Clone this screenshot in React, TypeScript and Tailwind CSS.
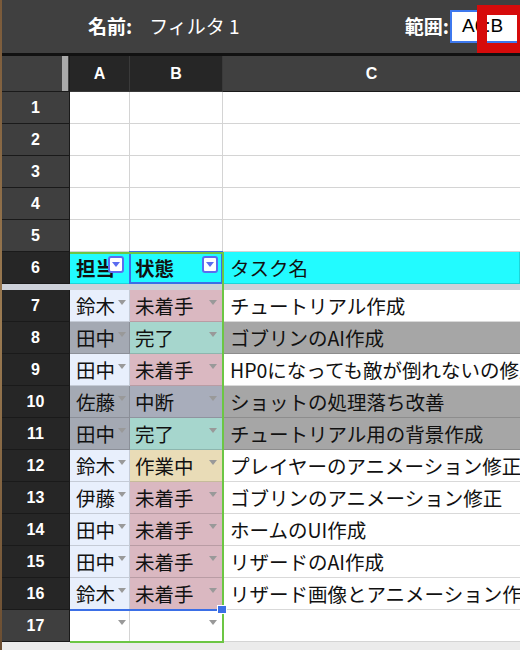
import React from "react"

type Row = { n: number; a: string; b: string; c: string; aBg: string; bBg: string; cBg: string }

const LB = "bg-[#e8effc]"
const GB = "bg-[#a4a9b3]"
const PK = "bg-[#dab8c1]"
const TL = "bg-[#a6d6cd]"
const BG = "bg-[#a8adbb]"
const BE = "bg-[#e9dcb7]"
const W = "bg-white"
const G = "bg-[#a6a6a6]"

const rows: Row[] = [
  { n: 7, a: "鈴木", b: "未着手", c: "チュートリアル作成", aBg: LB, bBg: PK, cBg: W },
  { n: 8, a: "田中", b: "完了", c: "ゴブリンのAI作成", aBg: GB, bBg: TL, cBg: G },
  { n: 9, a: "田中", b: "未着手", c: "HP0になっても敵が倒れないの修正", aBg: LB, bBg: PK, cBg: W },
  { n: 10, a: "佐藤", b: "中断", c: "ショットの処理落ち改善", aBg: GB, bBg: BG, cBg: G },
  { n: 11, a: "田中", b: "完了", c: "チュートリアル用の背景作成", aBg: GB, bBg: TL, cBg: G },
  { n: 12, a: "鈴木", b: "作業中", c: "プレイヤーのアニメーション修正", aBg: LB, bBg: BE, cBg: W },
  { n: 13, a: "伊藤", b: "未着手", c: "ゴブリンのアニメーション修正", aBg: LB, bBg: PK, cBg: W },
  { n: 14, a: "田中", b: "未着手", c: "ホームのUI作成", aBg: LB, bBg: PK, cBg: W },
  { n: 15, a: "田中", b: "未着手", c: "リザードのAI作成", aBg: LB, bBg: PK, cBg: W },
  { n: 16, a: "鈴木", b: "未着手", c: "リザード画像とアニメーション作成", aBg: LB, bBg: PK, cBg: W },
]

const rowHead = "h-[32px] flex items-center justify-center border-b border-r border-[#1a1a1a] text-white font-bold text-[16px] font-['Liberation_Sans',Arial,sans-serif]"
const cell = "relative h-[32px] flex items-center border-b border-r border-black/15 text-[19.5px] text-[#111] whitespace-nowrap overflow-hidden font-['Noto_Sans_CJK_JP',sans-serif]"

function Caret({ right }: { right: string }) {
  return (
    <span className={`absolute top-[10px] ${right} w-0 h-0 border-l-[4px] border-r-[4px] border-t-[5px] border-l-transparent border-r-transparent border-t-[#999]`} />
  )
}

function FilterBtn({ left }: { left: string }) {
  return (
    <span className={`absolute top-[4px] ${left} w-[16px] h-[17px] rounded-[3px] border-2 border-[#5b6cf0] bg-white flex items-center justify-center`}>
      <span className="w-0 h-0 border-l-[4px] border-r-[4px] border-t-[5px] border-l-transparent border-r-transparent border-t-[#5b6cf0]" />
    </span>
  )
}

export default function App() {
  return (
    <div className="w-[520px] h-[650px] overflow-hidden flex bg-[#ebebeb]">
      <div className="w-[2px] shrink-0 bg-gradient-to-b from-[#7a5a3a] via-[#9b7b52] to-[#6b4e32]" />
      <div className="flex-1 flex flex-col">
        {/* filter bar */}
        <div className="relative h-[53px] bg-[#404040] flex items-center text-white font-['Noto_Sans_CJK_JP',sans-serif]">
          <span className="ml-[86px] text-[19px] font-bold">名前:</span>
          <span className="ml-[17px] text-[19px]">フィルタ 1</span>
          <span className="ml-auto text-[19px] font-bold">範囲:</span>
          <div className="ml-[1px] h-[33px] w-[90px] mr-[-20px] bg-white border-2 border-[#3d78ee] flex items-center pl-[10px] text-black text-[19px] font-['Liberation_Sans',Arial,sans-serif]">
            A6:B
          </div>
          <div className="absolute left-[475px] top-[5px] w-[50px] h-[48px] border-[10px] border-[#d60b0b]" />
        </div>
        <div className="h-[3px] bg-[#111]" />

        {/* sheet */}
        <div className="relative grid grid-cols-[68px_60px_93px_1fr] bg-white">
          {/* column headers */}
          <div className="relative h-[36px] bg-[#404040] border-b border-r border-[#1a1a1a]">
            <span className="absolute right-[1px] top-0 w-[6px] h-[35px] bg-[#a9a9a9]" />
          </div>
          {["A", "B"].map(l => (
            <div key={l} className="h-[36px] bg-[#262626] border-b border-r border-[#3a3a3a] flex items-center justify-center text-white font-bold text-[16px] font-['Liberation_Sans',Arial,sans-serif]">{l}</div>
          ))}
          <div className="h-[36px] bg-[#404040] border-b border-[#1a1a1a] flex items-center justify-center text-white font-bold text-[16px] font-['Liberation_Sans',Arial,sans-serif]">C</div>

          {/* empty rows */}
          {[1, 2, 3, 4, 5].map(n => (
            <React.Fragment key={n}>
              <div className={`${rowHead} bg-[#3f3f3f]`}>{n}</div>
              <div className="h-[32px] border-b border-r border-[#d4d4d4]" />
              <div className="h-[32px] border-b border-r border-[#d4d4d4]" />
              <div className="h-[32px] border-b border-[#d4d4d4]" />
            </React.Fragment>
          ))}

          {/* header row 6 */}
          <div className={`${rowHead} bg-[#262626]`}>6</div>
          <div className={`${cell} bg-[#22fbff] font-bold pl-[6px]`}>
            担当
            <FilterBtn left="left-[38px]" />
          </div>
          <div className={`${cell} bg-[#22fbff] font-bold pl-[5px] overflow-visible`}>
            状態
            <FilterBtn left="left-[72px]" />
            <span className="absolute inset-[-1px] border-2 border-[#3b6fe6]" />
          </div>
          <div className={`${cell} bg-[#22fbff] pl-[7px]`}>タスク名</div>

          {/* frozen divider */}
          <div className="col-span-4 h-[6px] bg-[#cdd1d9]" />

          {rows.map(r => (
            <React.Fragment key={r.n}>
              <div className={`${rowHead} bg-[#262626]`}>{r.n}</div>
              <div className={`${cell} ${r.aBg} pl-[6px]`}>
                {r.a}
                <Caret right="right-[3px]" />
              </div>
              <div className={`${cell} ${r.bBg} pl-[5px]`}>
                {r.b}
                <Caret right="right-[5px]" />
              </div>
              <div className={`${cell} ${r.cBg} pl-[7px] border-r-0`}>{r.c}</div>
            </React.Fragment>
          ))}

          {/* row 17 */}
          <div className={`${rowHead} bg-[#3f3f3f]`}>17</div>
          <div className="relative h-[32px] border-b border-r border-[#d4d4d4]">
            <Caret right="right-[3px]" />
          </div>
          <div className="relative h-[32px] border-b border-r border-[#d4d4d4]">
            <Caret right="right-[5px]" />
          </div>
          <div className="h-[32px] border-b border-[#d4d4d4]" />

          {/* filter range outline */}
          <div className="absolute left-[68px] top-[196px] w-[154px] h-[391px] border-t-2 border-r-2 border-b-2 border-[#6cc644] pointer-events-none" />
          {/* selection bottom edge + handle */}
          <div className="absolute left-[68px] top-[553px] w-[148px] h-[2px] bg-[#3b6fe6]" />
          <div className="absolute left-[215px] top-[549px] w-[10px] h-[9px] bg-[#3b6fe6] border border-white" />
        </div>
      </div>
    </div>
  )
}
